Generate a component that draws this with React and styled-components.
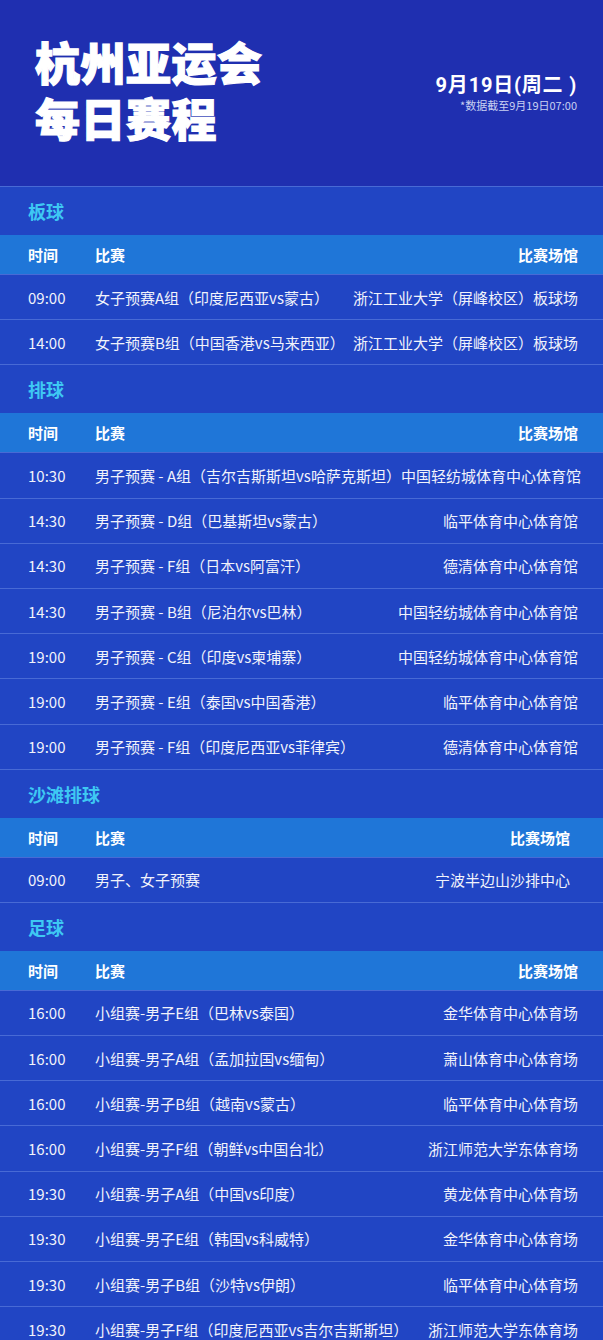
import React from 'react'
import styled, { createGlobalStyle } from 'styled-components'

const GlobalStyle = createGlobalStyle`
  body {
    margin: 0;
    background: #2145c4;
    font-family: 'Noto Sans CJK SC', 'Noto Sans', sans-serif;
  }
`

const schedule = [
  {
    sport: '板球',
    rows: [
      ['09:00', '女子预赛A组（印度尼西亚vs蒙古）', '浙江工业大学（屏峰校区）板球场'],
      ['14:00', '女子预赛B组（中国香港vs马来西亚）', '浙江工业大学（屏峰校区）板球场'],
    ],
  },
  {
    sport: '排球',
    rows: [
      ['10:30', '男子预赛 - A组（吉尔吉斯斯坦vs哈萨克斯坦）', '中国轻纺城体育中心体育馆'],
      ['14:30', '男子预赛 - D组（巴基斯坦vs蒙古）', '临平体育中心体育馆'],
      ['14:30', '男子预赛 - F组（日本vs阿富汗）', '德清体育中心体育馆'],
      ['14:30', '男子预赛 - B组（尼泊尔vs巴林）', '中国轻纺城体育中心体育馆'],
      ['19:00', '男子预赛 - C组（印度vs柬埔寨）', '中国轻纺城体育中心体育馆'],
      ['19:00', '男子预赛 - E组（泰国vs中国香港）', '临平体育中心体育馆'],
      ['19:00', '男子预赛 - F组（印度尼西亚vs菲律宾）', '德清体育中心体育馆'],
    ],
  },
  {
    sport: '沙滩排球',
    inset: 33,
    rows: [['09:00', '男子、女子预赛', '宁波半边山沙排中心']],
  },
  {
    sport: '足球',
    rows: [
      ['16:00', '小组赛-男子E组（巴林vs泰国）', '金华体育中心体育场'],
      ['16:00', '小组赛-男子A组（孟加拉国vs缅甸）', '萧山体育中心体育场'],
      ['16:00', '小组赛-男子B组（越南vs蒙古）', '临平体育中心体育场'],
      ['16:00', '小组赛-男子F组（朝鲜vs中国台北）', '浙江师范大学东体育场'],
      ['19:30', '小组赛-男子A组（中国vs印度）', '黄龙体育中心体育场'],
      ['19:30', '小组赛-男子E组（韩国vs科威特）', '金华体育中心体育场'],
      ['19:30', '小组赛-男子B组（沙特vs伊朗）', '临平体育中心体育场'],
      ['19:30', '小组赛-男子F组（印度尼西亚vs吉尔吉斯斯坦）', '浙江师范大学东体育场'],
    ],
  },
]

export default function App() {
  return (
    <Page>
      <GlobalStyle />
      <Header>
        <Title>
          <TitleLine>杭州亚运会</TitleLine>
          <TitleLine>每日赛程</TitleLine>
        </Title>
        <DateBlock>
          <DateText>9月19日(周二 )</DateText>
          <Note>*数据截至9月19日07:00</Note>
        </DateBlock>
      </Header>
      {schedule.map((s) => (
        <Section key={s.sport}>
          <SectionTitle>{s.sport}</SectionTitle>
          <HeadRow $inset={s.inset}>
            <Time>时间</Time>
            <Match>比赛</Match>
            <Venue>比赛场馆</Venue>
          </HeadRow>
          {s.rows.map(([t, m, v], i) => (
            <Row key={i} $inset={s.inset}>
              <Time>{t}</Time>
              <Match>{m}</Match>
              <Venue>{v}</Venue>
            </Row>
          ))}
        </Section>
      ))}
    </Page>
  )
}

const Page = styled.div`
  width: 603px;
  min-height: 1340px;
  background: #2145c4;
  color: #fff;
  overflow: hidden;
`

const Header = styled.div`
  height: 186px;
  box-sizing: border-box;
  padding: 36px 26px 0 35px;
  background: #1f2fb0;
  display: flex;
  justify-content: space-between;
  align-items: flex-start;
`

const Title = styled.h1`
  margin: 0;
  font-size: 45px;
  font-weight: 900;
  letter-spacing: 0.5px;
  -webkit-text-stroke: 1.2px #fff;
`

const TitleLine = styled.div`
  height: 56px;
  line-height: 52px;
`

const DateBlock = styled.div`
  margin-top: 37px;
  text-align: right;
`

const DateText = styled.div`
  font-family: Roboto, 'Noto Sans CJK SC', sans-serif;
  font-size: 20px;
  line-height: 24px;
  font-weight: 700;
  letter-spacing: 0.8px;
`

const Note = styled.div`
  font-size: 11px;
  line-height: 16px;
  color: #c9d1f2;
`

const Section = styled.section`
  background: #2145c4;
`

const SectionTitle = styled.h2`
  margin: 0;
  height: 49px;
  padding: 0 28px;
  display: flex;
  align-items: center;
  font-size: 18px;
  font-weight: 700;
  color: #3ec8f3;
  border-top: 1px solid rgba(120, 150, 235, 0.45);
  box-sizing: border-box;
`

const Row = styled.div`
  display: flex;
  align-items: center;
  height: 45.2px;
  box-sizing: border-box;
  padding: 0 ${(p) => p.$inset || 25}px 0 28px;
  font-size: 15px;
  color: #f1f3fb;
  white-space: nowrap;
  & + & {
    border-top: 1px solid rgba(120, 150, 235, 0.45);
  }
`

const HeadRow = styled(Row)`
  height: 39px;
  background: #1f76d8;
  color: #fff;
  font-weight: 700;
`

const Time = styled.span`
  width: 67px;
  flex: none;
`

const Match = styled.span`
  flex: none;
`

const Venue = styled.span`
  flex: 1;
  text-align: right;
`
